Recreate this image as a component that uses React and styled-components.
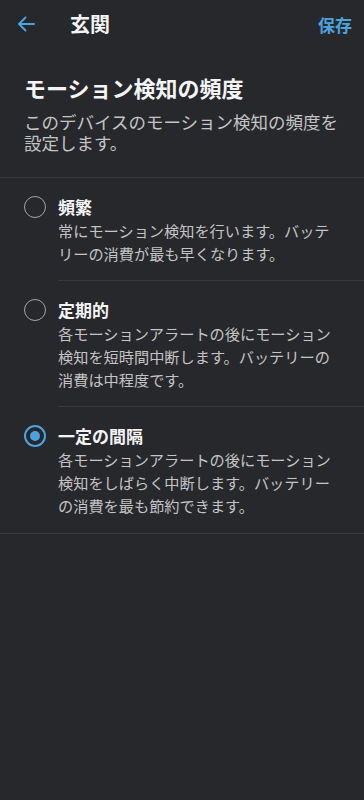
import React, { useState } from 'react';
import styled, { createGlobalStyle } from 'styled-components';

const GlobalStyle = createGlobalStyle`
  html, body {
    margin: 0;
    padding: 0;
    background: #27282c;
  }
  body {
    font-family: "Noto Sans CJK JP", "Noto Sans", sans-serif;
    -webkit-font-smoothing: antialiased;
  }
`

const Page = styled.div`
  min-height: 800px;
  background: #27282c;
  color: #f2f2f2;
`

const TopBar = styled.header`
  height: 48px;
  display: flex;
  align-items: center;
  padding: 0 12px 0 14px;
`

const BackButton = styled.button`
  background: transparent;
  border: none;
  padding: 0;
  width: 24px;
  height: 24px;
  display: flex;
  align-items: center;
  justify-content: center;
  cursor: pointer;
`

const Title = styled.h1`
  margin: 0 0 0 32px;
  flex: 1;
  font-size: 20px;
  font-weight: 700;
  line-height: 24px;
  color: #f4f4f4;
`

const SaveButton = styled.button`
  background: transparent;
  border: none;
  padding: 0;
  font-family: inherit;
  font-size: 17px;
  font-weight: 700;
  color: #4aa3df;
  cursor: pointer;
`

const Intro = styled.section`
  padding: 25px 16px 24px 24px;
  border-bottom: 1px solid #3a3b40;
`

const Heading = styled.h2`
  margin: 0;
  font-size: 22px;
  line-height: 28px;
  font-weight: 700;
  color: #f4f4f4;
`

const Lead = styled.p`
  margin: 10px 0 0;
  font-size: 17.5px;
  line-height: 21px;
  color: #c4c4c4;
`

const OptionList = styled.div`
  border-bottom: 1px solid #3a3b40;
`

const Option = styled.label`
  display: flex;
  cursor: pointer;
`

const RadioCell = styled.div`
  width: 58px;
  flex-shrink: 0;
  display: flex;
  justify-content: center;
  padding: 17px 0 0 11px;
  box-sizing: border-box;
`

const Radio = styled.span`
  margin-top: 1px;
  width: 22px;
  height: 22px;
  box-sizing: border-box;
  border-radius: 50%;
  border: ${({ $checked }) => ($checked ? '2px solid #4aa3df' : '1.5px solid #a4a4a6')};
  display: flex;
  align-items: center;
  justify-content: center;

  &::after {
    content: '';
    width: 10px;
    height: 10px;
    border-radius: 50%;
    background: #4aa3df;
    display: ${({ $checked }) => ($checked ? 'block' : 'none')};
  }
`

const Body = styled.div`
  flex: 1;
  padding: 17px 26px 16px 0;
  border-top: ${({ $first }) => ($first ? 'none' : '1px solid #3a3b40')};
  margin-top: ${({ $first }) => ($first ? '0' : '-1px')};
`

const OptionTitle = styled.div`
  font-size: 17px;
  line-height: 24px;
  font-weight: 700;
  color: #f4f4f4;
`

const OptionText = styled.div`
  font-size: 15.2px;
  line-height: 23px;
  color: #c4c4c4;
`

const BackArrow = () => (
  <svg width="18" height="16" viewBox="0 0 18 16" fill="none">
    <path d="M17 8H2M8.5 1.5L2 8l6.5 6.5" stroke="#4aa3df" strokeWidth="2" strokeLinecap="round" strokeLinejoin="round" />
  </svg>
)

const options = [
  { id: 'frequent', title: '頻繁', text: '常にモーション検知を行います。バッテリーの消費が最も早くなります。' },
  { id: 'periodic', title: '定期的', text: '各モーションアラートの後にモーション検知を短時間中断します。バッテリーの消費は中程度です。' },
  { id: 'interval', title: '一定の間隔', text: '各モーションアラートの後にモーション検知をしばらく中断します。バッテリーの消費を最も節約できます。' },
]

export default function App() {
  const [selected, setSelected] = useState('interval')
  return (
    <Page>
      <GlobalStyle />
      <TopBar>
        <BackButton aria-label="戻る"><BackArrow /></BackButton>
        <Title>玄関</Title>
        <SaveButton>保存</SaveButton>
      </TopBar>
      <Intro>
        <Heading>モーション検知の頻度</Heading>
        <Lead>このデバイスのモーション検知の頻度を設定します。</Lead>
      </Intro>
      <OptionList>
        {options.map((o, i) => (
          <Option key={o.id} onClick={() => setSelected(o.id)}>
            <RadioCell>
              <Radio $checked={selected === o.id} />
            </RadioCell>
            <Body $first={i === 0}>
              <OptionTitle>{o.title}</OptionTitle>
              <OptionText>{o.text}</OptionText>
            </Body>
          </Option>
        ))}
      </OptionList>
    </Page>
  )
}
